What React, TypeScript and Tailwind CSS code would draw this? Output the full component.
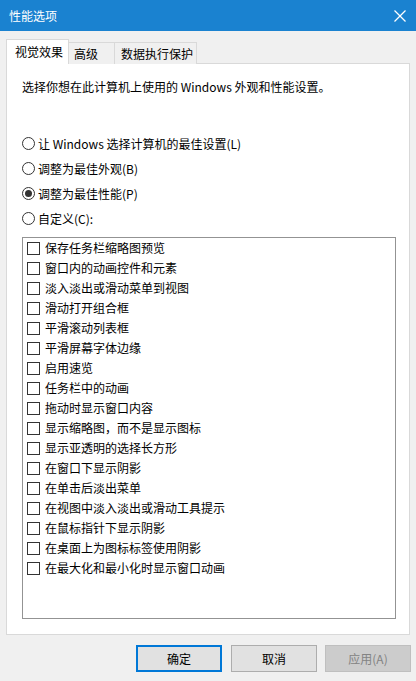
import { useState } from "react"

const FONT = { fontFamily: '"Noto Sans CJK SC", "Noto Sans", sans-serif' }

const options = [
  "保存任务栏缩略图预览",
  "窗口内的动画控件和元素",
  "淡入淡出或滑动菜单到视图",
  "滑动打开组合框",
  "平滑滚动列表框",
  "平滑屏幕字体边缘",
  "启用速览",
  "任务栏中的动画",
  "拖动时显示窗口内容",
  "显示缩略图，而不是显示图标",
  "显示亚透明的选择长方形",
  "在窗口下显示阴影",
  "在单击后淡出菜单",
  "在视图中淡入淡出或滑动工具提示",
  "在鼠标指针下显示阴影",
  "在桌面上为图标标签使用阴影",
  "在最大化和最小化时显示窗口动画",
]

const radios = [
  "让 Windows 选择计算机的最佳设置(L)",
  "调整为最佳外观(B)",
  "调整为最佳性能(P)",
  "自定义(C):",
]

function Radio({ label, checked, onClick }: { label: string; checked: boolean; onClick: () => void }) {
  return (
    <div className="flex items-center h-[25px] cursor-default" onClick={onClick}>
      <span className="w-[13px] h-[13px] rounded-full border border-[#333333] bg-white flex items-center justify-center">
        {checked && <span className="w-[7px] h-[7px] rounded-full bg-[#333333]" />}
      </span>
      <span className="ml-[3px] text-[12px] text-black leading-none">{label}</span>
    </div>
  )
}

export default function App() {
  const [mode, setMode] = useState(2)
  const [checked, setChecked] = useState<boolean[]>(options.map(() => false))

  return (
    <div className="w-[416px] h-[681px] bg-[#f0f0f0] flex flex-col overflow-hidden select-none" style={FONT}>
      {/* Title bar */}
      <div className="h-[31px] bg-[#1a82d0] flex items-center justify-between pl-[9px] pr-[5px]">
        <span className="text-white text-[12px] leading-none">性能选项</span>
        <svg width="12" height="12" viewBox="0 0 12 12" className="mr-[5px] stroke-white" strokeWidth="1.2" fill="none">
          <line x1="0.5" y1="0.5" x2="11.5" y2="11.5" />
          <line x1="11.5" y1="0.5" x2="0.5" y2="11.5" />
        </svg>
      </div>

      {/* Tabs */}
      <div className="flex items-end h-[25px] mt-[8px] ml-[6px] relative z-10">
        <div className="w-[63px] h-[25px] bg-white border border-[#d9d9d9] border-b-0 pl-[8px] flex items-center text-[12px] text-black">
          视觉效果
        </div>
        <div className="w-[46px] h-[22px] bg-[#f0f0f0] border border-[#d9d9d9] border-l-0 border-b-0 pl-[5px] flex items-center text-[12px] text-black">
          高级
        </div>
        <div className="w-[82px] h-[22px] bg-[#f0f0f0] border border-[#d9d9d9] border-l-0 border-b-0 pl-[6px] flex items-center text-[12px] text-black">
          数据执行保护
        </div>
      </div>

      {/* Panel */}
      <div className="mx-[6px] -mt-px h-[572px] bg-white border border-[#d9d9d9] flex flex-col pl-[15px] pr-[13px]">
        <div className="mt-[17px] text-[12px] text-black leading-none">选择你想在此计算机上使用的 Windows 外观和性能设置。</div>

        <div className="mt-[38px] flex flex-col">
          {radios.map((r, i) => (
            <Radio key={r} label={r} checked={mode === i} onClick={() => setMode(i)} />
          ))}
        </div>

        <div className="mt-[6px] h-[382px] border border-[#939393] bg-white flex flex-col pl-[4px]">
          {options.map((o, i) => (
            <div
              key={o}
              className="h-[20px] flex items-center cursor-default"
              onClick={() => setChecked(checked.map((c, j) => (j === i ? !c : c)))}
            >
              <span className="w-[13px] h-[13px] border border-[#333333] bg-white flex items-center justify-center">
                {checked[i] && (
                  <svg width="9" height="9" viewBox="0 0 9 9" fill="none" stroke="#333" strokeWidth="1.5">
                    <path d="M1 4.5 L3.5 7 L8 1.5" />
                  </svg>
                )}
              </span>
              <span className="ml-[5px] text-[12px] text-black leading-none">{o}</span>
            </div>
          ))}
        </div>
      </div>

      {/* Buttons */}
      <div className="flex mt-[10px] pl-[136px]">
        <button className="w-[86px] h-[27px] bg-[#e1e1e1] border-2 border-[#0078d7] text-[12px] text-black">确定</button>
        <button className="w-[86px] h-[27px] ml-[9px] bg-[#e1e1e1] border border-[#adadad] text-[12px] text-black">取消</button>
        <button className="w-[86px] h-[27px] ml-[8px] bg-[#cccccc] border border-[#bfbfbf] text-[12px] text-[#838383]" disabled>
          应用(A)
        </button>
      </div>
    </div>
  )
}
